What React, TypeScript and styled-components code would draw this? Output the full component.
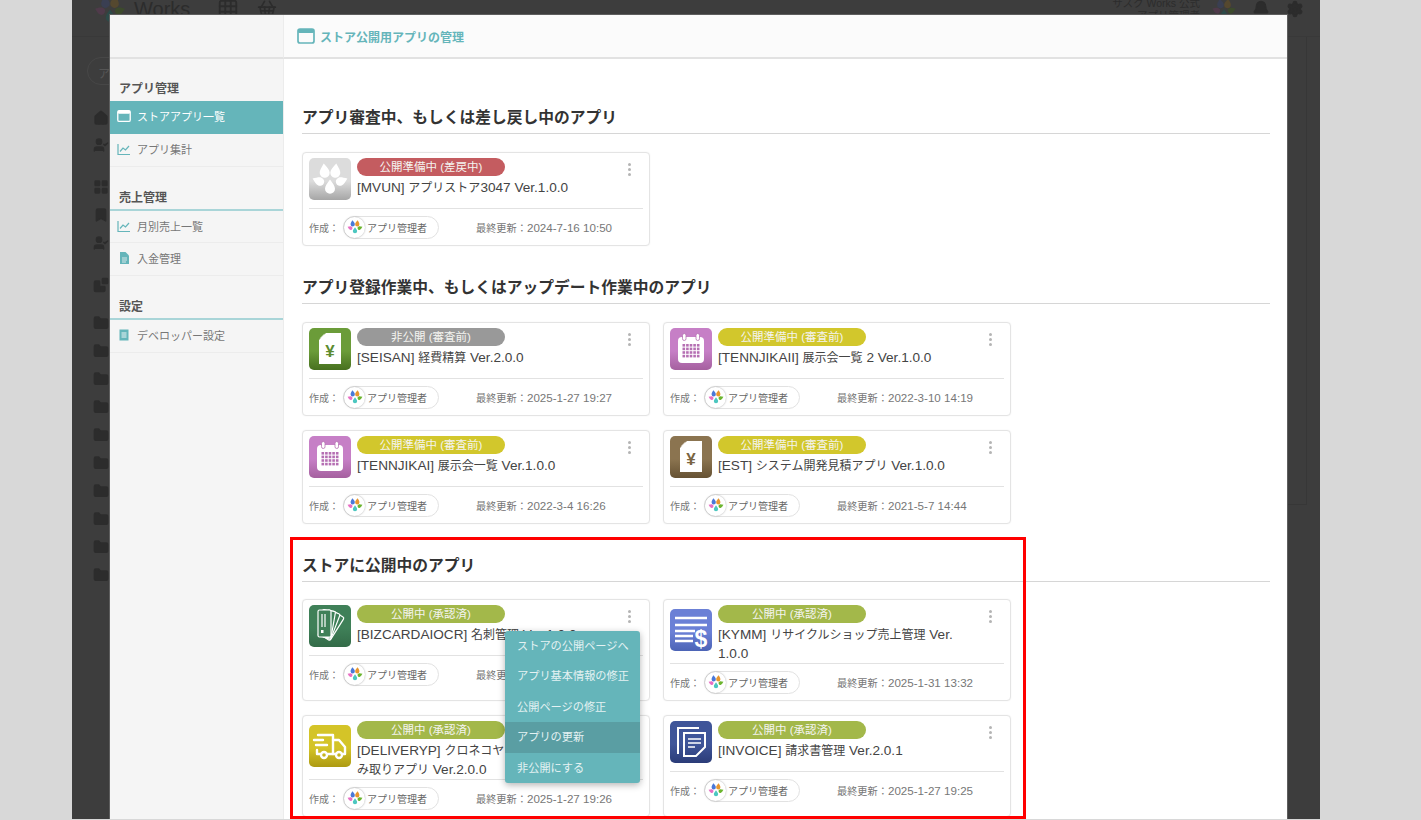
import type { ReactNode } from 'react';
import styled, { createGlobalStyle } from 'styled-components';
import { Bell, Bookmark, Folder, Grid3x3, Home, LayoutGrid, Settings, ShoppingBasket, UserCheck, Blocks } from 'lucide-react';

const GlobalStyle = createGlobalStyle`
  html, body {
    margin: 0;
    padding: 0;
    height: 820px;
    overflow: hidden;
    background: #d8d8d8;
    font-family: "Liberation Sans", "Noto Sans CJK JP", sans-serif;
  }
  * {
    box-sizing: border-box;
  }
`;

const TEAL = '#65b5ba';

const Page = styled.div`
  display: flex;
  height: 819px;
  padding-left: 72px;
  overflow: hidden;
`;

const Stage = styled.div`
  position: relative;
  width: 1248px;
  height: 100%;
  background: #3d3d3d;
  color: #2c2c2c;
  overflow: hidden;
`;

const BehindBar = styled.div`
  display: flex;
  align-items: center;
  height: 37px;
  padding: 0 16px 19px 20px;
  border-bottom: 1px solid #393939;
`;

const BehindWordmark = styled.span`
  margin-left: 6px;
  font-size: 20px;
  line-height: 18px;
`;

const BehindBarIcons = styled.div`
  display: flex;
  gap: 18px;
  margin-left: 27px;
`;

const BehindUser = styled.div`
  margin-left: auto;
  margin-right: 10px;
  font-size: 10.5px;
  line-height: 12px;
  text-align: right;
`;

const BehindTools = styled.div`
  display: flex;
  align-items: center;
  gap: 16px;
  margin-left: 14px;
`;

const BehindBody = styled.div`
  display: flex;
  padding-right: 13px;
`;

const BehindColumn = styled.div`
  flex: none;
  width: 160px;
`;

const BehindPanel = styled.div`
  flex: 1;
  height: 468px;
  border-right: 1px solid #373737;
  border-bottom: 1px solid #373737;
`;

const BehindSearch = styled.div`
  width: 120px;
  height: 28px;
  margin: 20px 0 0 15px;
  padding: 6px 10px;
  border: 1px solid #474747;
  border-radius: 14px;
  font-size: 12px;
  color: #555;
`;

const BehindNav = styled.div`
  display: flex;
  flex-direction: column;
  padding: 25px 0 0 21px;
`;

const BehindIcon = styled.div<{ $gap: number }>`
  display: flex;
  height: 16px;
  margin-bottom: ${(p) => p.$gap}px;
`;

const Modal = styled.div`
  position: absolute;
  top: 15px;
  left: 38px;
  display: grid;
  grid-template-columns: 174px 1fr;
  grid-template-rows: 44px 1fr;
  width: 1177px;
  height: 805px;
  background: #fff;
  box-shadow: 0 0 0 1px #5e5e5e;
`;

const SideHead = styled.div`
  background: #f5f5f5;
  border-right: 1px solid #ececec;
  border-bottom: 2px solid #e2e2e2;
`;

const TopHead = styled.div`
  display: flex;
  align-items: center;
  gap: 5px;
  padding-left: 13px;
  background: #fbfbfb;
  border-bottom: 2px solid #e2e2e2;
  color: ${TEAL};
  font-size: 12px;
  font-weight: 700;
`;

const Sidebar = styled.nav`
  padding-top: 15px;
  background: #f5f5f5;
  border-right: 1px solid #ececec;
`;

const GroupTitle = styled.div<{ $lined?: boolean }>`
  display: flex;
  align-items: center;
  height: ${(p) => (p.$lined ? 28 : 27)}px;
  margin-top: ${(p) => (p.$lined ? 16 : 0)}px;
  padding-left: 9px;
  border-bottom: ${(p) => (p.$lined ? '2px solid #a9d5d8' : 'none')};
  color: #555;
  font-size: 12px;
  font-weight: 700;
`;

const SideItem = styled.div<{ $active?: boolean; $short?: boolean }>`
  display: flex;
  align-items: center;
  gap: 6px;
  height: ${(p) => (p.$short ? 32 : 33)}px;
  padding: 0 0 2px 7px;
  background: ${(p) => (p.$active ? TEAL : 'transparent')};
  border-bottom: 1px solid ${(p) => (p.$active ? TEAL : '#ececec')};
  color: ${(p) => (p.$active ? '#fff' : '#777')};
  font-size: 11px;
`;

const Main = styled.main`
  padding: 46px 17px 0 18px;
  overflow: hidden;
`;

const Section = styled.section`
  position: relative;
  margin-bottom: 29px;
`;

const Heading = styled.h2<{ $tight?: boolean }>`
  height: 29px;
  margin: 0 0 ${(p) => (p.$tight ? 17 : 18)}px;
  padding-top: 1px;
  border-bottom: 1px solid #d6d6d6;
  color: #333;
  font-size: 15.75px;
  font-weight: 700;
  line-height: 24px;
`;

const CardGrid = styled.div`
  display: grid;
  grid-template-columns: 348px 348px;
  gap: 14px 13px;
`;

const Card = styled.div<{ $raised?: boolean }>`
  position: relative;
  z-index: ${(p) => (p.$raised ? 2 : 1)};
  padding: 5px 6px 0;
  background: #fff;
  border: 1px solid #e4e4e4;
  border-radius: 4px;
  box-shadow: 0 0 2px rgba(0, 0, 0, 0.06);
`;

const CardHead = styled.div`
  display: flex;
  align-items: center;
  min-height: 51px;
  padding-right: 30px;
  border-bottom: 1px solid #e2e2e2;
`;

const AppIcon = styled.div<{ $from: string; $to: string }>`
  flex: none;
  width: 42px;
  height: 42px;
  margin: 0 6px 8px 0;
  border-radius: 5px;
  background: linear-gradient(${(p) => p.$from} 55%, ${(p) => p.$to});
  overflow: hidden;
  svg {
    display: block;
  }
`;

const HeadText = styled.div`
  align-self: flex-start;
  flex: 1;
  min-width: 0;
`;

const StatusPill = styled.div<{ $color: string }>`
  width: 148px;
  height: 18px;
  margin-bottom: 2px;
  border-radius: 9px;
  background: ${(p) => p.$color};
  color: #f4f4f0;
  font-size: 11.5px;
  line-height: 18px;
  text-align: center;
`;

const AppTitle = styled.div`
  color: #444;
  font-size: 13.6px;
  line-height: 19px;
  white-space: pre-line;
`;

const TitleCjk = styled.span`
  font-size: 12px;
  line-height: 0;
`;

const Kebab = styled.div`
  position: absolute;
  top: 10px;
  right: 18px;
  display: flex;
  flex-direction: column;
  gap: 2px;
  span {
    width: 3px;
    height: 3px;
    border-radius: 50%;
    background: #b4b4b4;
  }
`;

const CardFoot = styled.div`
  display: flex;
  align-items: center;
  height: 36px;
  color: #777;
  font-size: 10px;
`;

const MadeBy = styled.span`
  width: 34px;
`;

const Chip = styled.div`
  display: flex;
  align-items: center;
  gap: 2px;
  width: 96px;
  height: 23px;
  border: 1px solid #e2e2e2;
  border-radius: 12px;
  color: #666;
`;

const Avatar = styled.div`
  flex: none;
  display: flex;
  align-items: center;
  justify-content: center;
  width: 21px;
  height: 21px;
  border-radius: 50%;
  background: #fff;
  box-shadow: 0 0 2px rgba(0, 0, 0, 0.35);
`;

const Updated = styled.span`
  margin-left: 37px;
  font-size: 10.2px;
`;

const UpdatedTime = styled.span`
  font-size: 11.6px;
`;

const Menu = styled.div`
  position: absolute;
  top: 31px;
  right: 9px;
  width: 135px;
  background: ${TEAL};
  border-radius: 3px;
  box-shadow: 0 2px 7px rgba(0, 0, 0, 0.3);
  overflow: hidden;
`;

const MenuItem = styled.div<{ $hover?: boolean }>`
  height: 30.4px;
  padding-left: 12px;
  background: ${(p) => (p.$hover ? '#5a9ea3' : 'transparent')};
  color: #e4f2f3;
  font-size: 11.2px;
  line-height: 30px;
  white-space: nowrap;
`;

const RedFrame = styled.div`
  position: absolute;
  top: -16px;
  left: -12px;
  z-index: 3;
  width: 736px;
  height: 282px;
  border: 3px solid #f00;
  pointer-events: none;
`;

const DROP = 'M0-7.5C2.800-3.500 5-1 5 1.800A5 5 0 0 1-5 1.800C-5-1-2.800-3.500 0-7.500Z';

const Drops = ({ size, colors }: { size: number; colors: string[] }) => (
  <svg width={size} height={size} viewBox="0 0 42 42">
    <path d={DROP} transform="translate(15.500 13) rotate(-6)" fill={colors[0]} />
    <path d={DROP} transform="translate(26.500 13) rotate(6)" fill={colors[1]} />
    <path d={DROP} transform="translate(9.500 23) rotate(-68) scale(0.85)" fill={colors[2]} />
    <path d={DROP} transform="translate(32.500 23) rotate(68) scale(0.85)" fill={colors[3]} />
    <path d={DROP} transform="translate(21 29)" fill={colors[4]} />
  </svg>
);

const LOGO_COLORS = ['#4a78d8', '#e8962e', '#e86fc4', '#6cb52f', '#4cc7c0'];
const DIM_COLORS = ['#3a3f52', '#55482f', '#4f3a4a', '#3c4a2c', '#2c4a48'];

const WindowIcon = ({ color, size = 14 }: { color: string; size?: number }) => (
  <svg width={size} height={size} viewBox="0 0 18 18">
    <rect x="1" y="2" width="16" height="14" rx="2" fill="none" stroke={color} strokeWidth="1.7" />
    <rect x="1" y="2" width="16" height="4" rx="1.5" fill={color} />
  </svg>
);

const ChartIcon = () => (
  <svg width="14" height="14" viewBox="0 0 14 14" fill="none" stroke={TEAL} strokeWidth="1.2">
    <path d="M1 2v10.500h12" />
    <path d="M3 9.500l3-3.500 2.500 2 3.500-4" />
  </svg>
);

const DocIcon = () => (
  <svg width="14" height="14" viewBox="0 0 14 14">
    <path d="M3 1h5.500L12 4.500V13H3z" fill={TEAL} />
    <path d="M5 7h5M5 9h5M5 11h4" stroke="#f5f5f5" strokeWidth="0.8" />
  </svg>
);

const BookIcon = () => (
  <svg width="14" height="14" viewBox="0 0 14 14">
    <rect x="2.5" y="1.5" width="9" height="11" fill={TEAL} />
    <rect x="4.5" y="4" width="5" height="6" fill="#a9d5d8" />
  </svg>
);

const glyphText = { fontFamily: '"Liberation Sans", sans-serif', fontWeight: 700 };

const FileYen = ({ ink }: { ink: string }) => (
  <svg width="42" height="42" viewBox="0 0 42 42">
    <path d="M17 5h15v31H10V12z" fill="#fff" />
    <path d="M15.500 5.500v5h-5z" fill="#fff" opacity="0.75" />
    <text x="21" y="29" fontSize="17" textAnchor="middle" fill={ink} style={glyphText}>¥</text>
  </svg>
);

const CalendarGlyph = () => (
  <svg width="42" height="42" viewBox="0 0 42 42">
    <rect x="8" y="9" width="26" height="26" rx="4" fill="#fff" />
    <rect x="12.500" y="5.500" width="3.500" height="7" rx="1.750" fill="#fff" stroke="#b56fb3" strokeWidth="0.8" />
    <rect x="26" y="5.500" width="3.500" height="7" rx="1.750" fill="#fff" stroke="#b56fb3" strokeWidth="0.8" />
    {[0, 1, 2, 3].map((row) =>
      [0, 1, 2, 3, 4].map((col) => (
        <rect key={`${row}-${col}`} x={12.5 + col * 3.6} y={16 + row * 3.6} width="2.6" height="2.6" fill="#b56fb3" />
      ))
    )}
  </svg>
);

const CardsGlyph = () => (
  <svg width="42" height="42" viewBox="0 0 42 42" fill="#3f8058" stroke="#fff" strokeWidth="1.2">
    <rect x="9" y="5" width="13" height="27" rx="1.5" transform="rotate(32 15 32)" />
    <rect x="9" y="5" width="13" height="27" rx="1.5" transform="rotate(21 15 32)" />
    <rect x="9" y="5" width="13" height="27" rx="1.5" transform="rotate(10 15 32)" />
    <rect x="9" y="5" width="13" height="27" rx="1.5" />
    <path d="M13 9v13M16 9v13" fill="none" />
    <rect x="12" y="25" width="2.500" height="3" fill="#fff" stroke="none" />
  </svg>
);

const ReceiptGlyph = () => (
  <svg width="42" height="42" viewBox="0 0 42 42">
    <path d="M5 9h32M5 16h32M5 22h20M5 27h18M5 32h18" stroke="#fff" strokeWidth="2.4" />
    <text x="31" y="38" fontSize="23" textAnchor="middle" fill="#fff" style={glyphText}>$</text>
  </svg>
);

const TruckGlyph = () => (
  <svg width="42" height="42" viewBox="0 0 42 42" fill="none" stroke="#fff" strokeWidth="2.4" strokeLinecap="round" strokeLinejoin="round">
    <path d="M9 10h15v19H19" />
    <path d="M24 15h6l6 7v7h-3" />
    <path d="M5 15h9M7 20h11" />
    <path d="M8 25v4h3" />
    <circle cx="15" cy="30" r="3" />
    <circle cx="30" cy="30" r="3" />
    <path d="M24 29h3" />
  </svg>
);

const InvoiceGlyph = () => (
  <svg width="42" height="42" viewBox="0 0 42 42" fill="none" stroke="#fff" strokeWidth="2">
    <path d="M8 33V7h21" />
    <path d="M14 12h21v14l-9 9H14z" />
    <path d="M18 18h13M18 22h13M18 26h7" strokeWidth="1.5" />
  </svg>
);

type AppInfo = {
  id: string;
  title: string;
  status: string;
  color: string;
  updated: string;
  from: string;
  to: string;
  glyph: ReactNode;
  menu?: boolean;
};

const RED = '#c45c60';
const GRAY = '#999999';
const YELLOW = '#d2c72c';
const GREEN = '#a3b84a';

const reviewing: AppInfo[] = [
  {
    id: 'mvun',
    title: '[MVUN] アプリストア3047 Ver.1.0.0',
    status: '公開準備中 (差戻中)',
    color: RED,
    updated: '2024-7-16 10:50',
    from: '#dcdcdc',
    to: '#a6a6a6',
    glyph: <Drops size={42} colors={['#fff', '#fff', '#fff', '#fff', '#fff']} />,
  },
];

const drafts: AppInfo[] = [
  {
    id: 'seisan',
    title: '[SEISAN] 経費精算 Ver.2.0.0',
    status: '非公開 (審査前)',
    color: GRAY,
    updated: '2025-1-27 19:27',
    from: '#6b9c39',
    to: '#47701f',
    glyph: <FileYen ink="#5d8c30" />,
  },
  {
    id: 'tenjikai2',
    title: '[TENNJIKAII] 展示会一覧 2 Ver.1.0.0',
    status: '公開準備中 (審査前)',
    color: YELLOW,
    updated: '2022-3-10 14:19',
    from: '#c67fc6',
    to: '#a5609f',
    glyph: <CalendarGlyph />,
  },
  {
    id: 'tenjikai',
    title: '[TENNJIKAI] 展示会一覧 Ver.1.0.0',
    status: '公開準備中 (審査前)',
    color: YELLOW,
    updated: '2022-3-4 16:26',
    from: '#c67fc6',
    to: '#a5609f',
    glyph: <CalendarGlyph />,
  },
  {
    id: 'est',
    title: '[EST] システム開発見積アプリ Ver.1.0.0',
    status: '公開準備中 (審査前)',
    color: YELLOW,
    updated: '2021-5-7 14:44',
    from: '#8b7450',
    to: '#665233',
    glyph: <FileYen ink="#7a6442" />,
  },
];

const published: AppInfo[] = [
  {
    id: 'bizcard',
    title: '[BIZCARDAIOCR] 名刺管理 Ver.1.0.0',
    status: '公開中 (承認済)',
    color: GREEN,
    updated: '2025-1-27 19:27',
    from: '#3f8058',
    to: '#336b48',
    glyph: <CardsGlyph />,
    menu: true,
  },
  {
    id: 'kymm',
    title: '[KYMM] リサイクルショップ売上管理 Ver.\n1.0.0',
    status: '公開中 (承認済)',
    color: GREEN,
    updated: '2025-1-31 13:32',
    from: '#6b80d6',
    to: '#4c64b6',
    glyph: <ReceiptGlyph />,
  },
  {
    id: 'delivery',
    title: '[DELIVERYP] クロネコヤマト荷物集荷申込\nみ取りアプリ Ver.2.0.0',
    status: '公開中 (承認済)',
    color: GREEN,
    updated: '2025-1-27 19:26',
    from: '#d4c428',
    to: '#ad9a12',
    glyph: <TruckGlyph />,
  },
  {
    id: 'invoice',
    title: '[INVOICE] 請求書管理 Ver.2.0.1',
    status: '公開中 (承認済)',
    color: GREEN,
    updated: '2025-1-27 19:25',
    from: '#3f5599',
    to: '#2b3c78',
    glyph: <InvoiceGlyph />,
  },
];

const MENU_ITEMS = ['ストアの公開ページへ', 'アプリ基本情報の修正', '公開ページの修正', 'アプリの更新', '非公開にする'];

// the japanese part of a title runs smaller than the latin part
function Title({ text }: { text: string }) {
  const parts = text.split(/([\u3000-\u9fff]+)/);
  return (
    <AppTitle>
      {parts.map((part, i) => (i % 2 ? <TitleCjk key={i}>{part}</TitleCjk> : part))}
    </AppTitle>
  );
}

function AppCard({ app }: { app: AppInfo }) {
  return (
    <Card $raised={app.menu}>
      <CardHead>
        <AppIcon $from={app.from} $to={app.to}>{app.glyph}</AppIcon>
        <HeadText>
          <StatusPill $color={app.color}>{app.status}</StatusPill>
          <Title text={app.title} />
        </HeadText>
      </CardHead>
      <Kebab><span /><span /><span /></Kebab>
      <CardFoot>
        <MadeBy>作成：</MadeBy>
        <Chip>
          <Avatar><Drops size={18} colors={LOGO_COLORS} /></Avatar>
          アプリ管理者
        </Chip>
        <Updated>最終更新：<UpdatedTime>{app.updated}</UpdatedTime></Updated>
      </CardFoot>
      {app.menu && (
        <Menu>
          {MENU_ITEMS.map((item) => (
            <MenuItem key={item} $hover={item === 'アプリの更新'}>{item}</MenuItem>
          ))}
        </Menu>
      )}
    </Card>
  );
}

function Behind() {
  return (
    <>
      <BehindBar>
        <Drops size={36} colors={DIM_COLORS} />
        <BehindWordmark>Works</BehindWordmark>
        <BehindBarIcons>
          <Grid3x3 size={22} />
          <ShoppingBasket size={20} />
        </BehindBarIcons>
        <BehindUser>サスク Works 公式<br />アプリ管理者</BehindUser>
        <Drops size={28} colors={DIM_COLORS} />
        <BehindTools>
          <Bell size={18} fill="#2c2c2c" />
          <Settings size={18} fill="#2c2c2c" />
        </BehindTools>
      </BehindBar>
      <BehindBody>
        <BehindColumn>
          <BehindSearch>ア</BehindSearch>
          <BehindNav>
            <BehindIcon $gap={11}><Home size={16} fill="#2c2c2c" /></BehindIcon>
            <BehindIcon $gap={26}><UserCheck size={16} fill="#2c2c2c" /></BehindIcon>
            <BehindIcon $gap={12}><LayoutGrid size={16} fill="#2c2c2c" /></BehindIcon>
            <BehindIcon $gap={12}><Bookmark size={16} fill="#2c2c2c" /></BehindIcon>
            <BehindIcon $gap={26}><UserCheck size={16} fill="#2c2c2c" /></BehindIcon>
            <BehindIcon $gap={22}><Blocks size={16} fill="#2c2c2c" /></BehindIcon>
            {Array.from({ length: 10 }, (_, i) => (
              <BehindIcon key={i} $gap={12}><Folder size={16} fill="#2c2c2c" /></BehindIcon>
            ))}
          </BehindNav>
        </BehindColumn>
        <BehindPanel />
      </BehindBody>
    </>
  );
}

export default function App() {
  return (
    <Page>
      <GlobalStyle />
      <Stage>
        <Behind />
        <Modal>
          <SideHead />
          <TopHead>
            <WindowIcon color={TEAL} size={18} />
            ストア公開用アプリの管理
          </TopHead>
          <Sidebar>
            <GroupTitle>アプリ管理</GroupTitle>
            <SideItem $active><WindowIcon color="#fff" />ストアアプリ一覧</SideItem>
            <SideItem><ChartIcon />アプリ集計</SideItem>
            <GroupTitle $lined>売上管理</GroupTitle>
            <SideItem $short><ChartIcon />月別売上一覧</SideItem>
            <SideItem><DocIcon />入金管理</SideItem>
            <GroupTitle $lined>設定</GroupTitle>
            <SideItem><BookIcon />デベロッパー設定</SideItem>
          </Sidebar>
          <Main>
            <Section>
              <Heading>アプリ審査中、もしくは差し戻し中のアプリ</Heading>
              <CardGrid>
                {reviewing.map((app) => <AppCard key={app.id} app={app} />)}
              </CardGrid>
            </Section>
            <Section>
              <Heading>アプリ登録作業中、もしくはアップデート作業中のアプリ</Heading>
              <CardGrid>
                {drafts.map((app) => <AppCard key={app.id} app={app} />)}
              </CardGrid>
            </Section>
            <Section>
              <Heading $tight>ストアに公開中のアプリ</Heading>
              <CardGrid>
                {published.map((app) => <AppCard key={app.id} app={app} />)}
              </CardGrid>
              <RedFrame />
            </Section>
          </Main>
        </Modal>
      </Stage>
    </Page>
  );
}
